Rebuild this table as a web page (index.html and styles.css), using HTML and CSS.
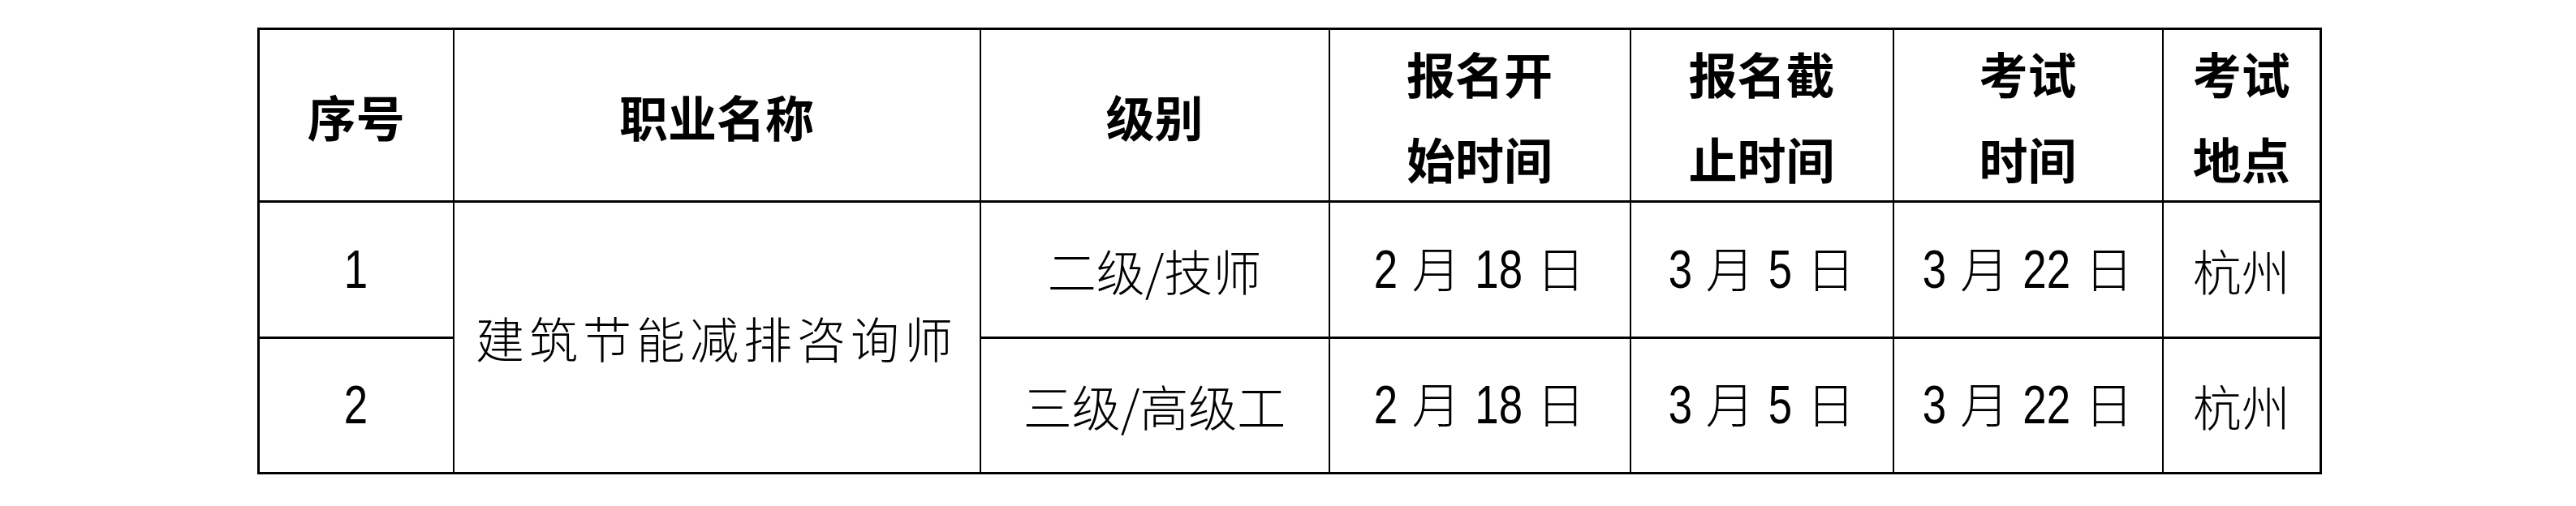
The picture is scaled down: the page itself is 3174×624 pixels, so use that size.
FILE: index.html
```html
<!DOCTYPE html>
<html lang="zh-CN">
<head>
<meta charset="utf-8">
<title>职业技能等级认定安排</title>
<link rel="stylesheet" href="styles.css">
</head>
<body>
<div class="page">
  <table class="schedule">
    <colgroup>
      <col class="c-no">
      <col class="c-job">
      <col class="c-level">
      <col class="c-start">
      <col class="c-end">
      <col class="c-exam">
      <col class="c-place">
    </colgroup>
    <thead>
      <tr class="head-row">
        <th>序号</th>
        <th>职业名称</th>
        <th>级别</th>
        <th>报名开<br>始时间</th>
        <th>报名截<br>止时间</th>
        <th>考试<br>时间</th>
        <th>考试<br>地点</th>
      </tr>
    </thead>
    <tbody>
      <tr class="row-1">
        <td><span class="d n1">1</span></td>
        <td class="job" rowspan="2">建筑节能减排咨询师</td>
        <td>二级/技师</td>
        <td class="date"><span class="d n1">2</span> 月 <span class="d n2">18</span> 日</td>
        <td class="date"><span class="d n1">3</span> 月 <span class="d n1">5</span> 日</td>
        <td class="date"><span class="d n1">3</span> 月 <span class="d n2">22</span> 日</td>
        <td>杭州</td>
      </tr>
      <tr class="row-2">
        <td><span class="d n1">2</span></td>
        <td>三级/高级工</td>
        <td class="date"><span class="d n1">2</span> 月 <span class="d n2">18</span> 日</td>
        <td class="date"><span class="d n1">3</span> 月 <span class="d n1">5</span> 日</td>
        <td class="date"><span class="d n1">3</span> 月 <span class="d n2">22</span> 日</td>
        <td>杭州</td>
      </tr>
    </tbody>
  </table>
</div>
</body>
</html>
```

FILE: styles.css
```css
html, body {
  margin: 0;
  padding: 0;
  background: #ffffff;
}

.page {
  padding: 34px 0 0 317px;
}

.schedule {
  border-collapse: collapse;
  table-layout: fixed;
  width: 2541px;
  border: 3px solid #000;
  color: #000;
}

.c-no { width: 240px; }
.c-job { width: 649px; }
.c-level { width: 430px; }
.c-start { width: 371px; }
.c-end { width: 324px; }
.c-exam { width: 332px; }
.c-place { width: 195px; }

.schedule th,
.schedule td {
  border-top: 3px solid #000;
  border-bottom: 3px solid #000;
  border-left: 2px solid #000;
  border-right: 2px solid #000;
  padding: 0;
  text-align: center;
  vertical-align: middle;
  white-space: nowrap;
}

.schedule th {
  font-family: "Noto Sans CJK SC", "Noto Sans", sans-serif;
  font-weight: 700;
  font-size: 60px;
  line-height: 105px;
}

.head-row { height: 213px; }
.row-1 { height: 168px; }
.row-2 { height: 167px; }

.schedule td {
  font-family: "Noto Sans CJK SC", sans-serif;
  font-weight: 300;
  font-size: 60px;
  line-height: 1.2;
}

.schedule td.date {
  word-spacing: 4px;
}

.d {
  display: inline-block;
  font-family: "Liberation Sans", Arial, sans-serif;
  font-weight: 400;
  font-size: 66px;
  transform: scaleX(0.8);
}

.n1 { margin: 0 -0.0556em; }
.n2 { margin: 0 -0.111em; }

.schedule td.job {
  letter-spacing: 6px;
}
```
